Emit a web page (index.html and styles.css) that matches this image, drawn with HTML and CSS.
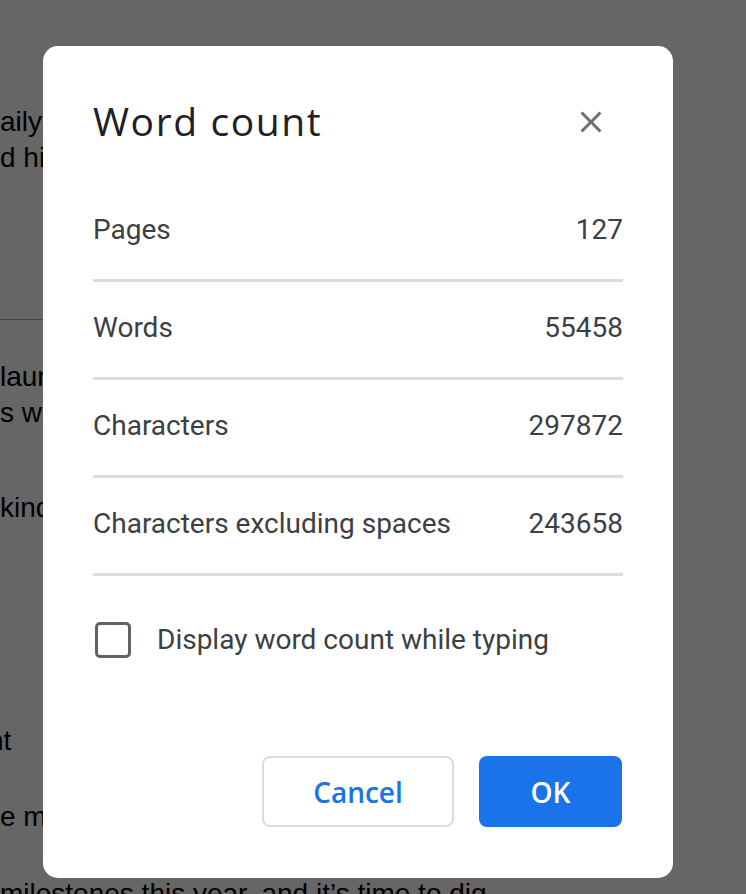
FILE: index.html
```html
<!DOCTYPE html>
<html lang="en">
<head>
    <meta charset="UTF-8">
    <meta name="viewport" content="width=device-width, initial-scale=1.0">
    <title>Word count</title>
    <link rel="stylesheet" href="styles.css">
</head>
<body>
<div class="document">
    <p>aily<br>d hi</p>
    <hr class="doc-rule">
    <p>laun<br>s we</p>
    <p class="gap-small">kind</p>
    <p class="gap-large cut">nt</p>
    <p class="gap-tight">e m</p>
    <p class="gap-last">milestones this year, and it’s time to dig</p>
</div>

<div class="overlay">
    <div class="dialog">
        <div class="dialog-header">
            <h1 class="dialog-title">Word count</h1>
            <button class="close-button" aria-label="Close">
                <svg width="36" height="36" viewBox="0 0 24 24"><path fill="#6f6f6f" d="M19 6.41L17.59 5 12 10.59 6.41 5 5 6.41 10.59 12 5 17.59 6.41 19 12 13.41 17.59 19 19 17.59 13.41 12z"/></svg>
            </button>
        </div>

        <div class="count-row"><span>Pages</span><span>127</span></div>
        <div class="count-row"><span>Words</span><span>55458</span></div>
        <div class="count-row"><span>Characters</span><span>297872</span></div>
        <div class="count-row"><span>Characters excluding spaces</span><span>243658</span></div>

        <label class="check-row">
            <span class="checkbox"></span>
            <span>Display word count while typing</span>
        </label>

        <div class="dialog-actions">
            <button class="dialog-button cancel">Cancel</button>
            <button class="dialog-button ok">OK</button>
        </div>
    </div>
</div>
</body>
</html>
```

FILE: styles.css
```css
* {
    box-sizing: border-box;
}

body {
    margin: 0;
    background-color: white;
    overflow: hidden;
}

.document {
    padding-top: 104px;
    font-family: "Liberation Sans", Arial, sans-serif;
    font-size: 28px;
    line-height: 36px;
    color: #000;
    white-space: nowrap;
}

.document p {
    margin: 0;
}

.doc-rule {
    width: 500px;
    margin: 143px 0 0;
    border: none;
    border-top: 1px solid #aaa;
}

.doc-rule + p {
    margin-top: 39px;
}

.document .gap-small {
    margin-top: 59px;
}

.document .gap-large {
    margin-top: 197px;
}

.document .gap-tight {
    margin-top: 40px;
}

.document .gap-last {
    margin-top: 41px;
}

.document .cut {
    text-indent: -12px;
}

.overlay {
    position: fixed;
    top: 0;
    left: 0;
    right: 0;
    bottom: 0;
    background-color: rgba(0, 0, 0, 0.6);
}

.dialog {
    width: 630px;
    margin: 46px 0 0 43px;
    padding: 48px 50px 51px;
    background-color: white;
    border-radius: 15px;
}

.dialog-header {
    display: flex;
    justify-content: space-between;
    align-items: flex-start;
    height: 48px;
    margin-bottom: 42px;
}

.dialog-title {
    margin: 3px 0 0;
    font-family: "Open Sans", sans-serif;
    font-weight: 400;
    font-size: 39px;
    line-height: 48px;
    letter-spacing: 1.6px;
    color: #202124;
}

.close-button {
    display: flex;
    padding: 0;
    margin: 10px 14px 0 0;
    background: none;
    border: none;
    cursor: pointer;
}

.count-row {
    display: flex;
    justify-content: space-between;
    padding: 31px 0 34px;
    border-bottom: 3px solid #dadce0;
    font-family: Roboto, sans-serif;
    font-size: 28px;
    line-height: 30px;
    color: #3c4043;
}

.check-row {
    display: flex;
    align-items: center;
    gap: 26px;
    margin-top: 46px;
    font-family: Roboto, sans-serif;
    font-size: 28px;
    line-height: 36px;
    color: #3c4043;
}

.checkbox {
    width: 36px;
    height: 36px;
    margin-left: 2px;
    border: 3.5px solid #5f6368;
    border-radius: 5px;
}

.dialog-actions {
    display: flex;
    justify-content: flex-end;
    gap: 25px;
    margin-top: 98px;
}

.dialog-button {
    height: 71px;
    padding: 0 48px;
    border-radius: 8px;
    font-family: "Open Sans", sans-serif;
    font-weight: 600;
    font-size: 28px;
    cursor: pointer;
}

.dialog-button.cancel {
    width: 192px;
    background-color: white;
    border: 2px solid #dadce0;
    color: #1a73e8;
}

.dialog-button.ok {
    width: 143px;
    margin-right: 1px;
    background-color: #1a73e8;
    border: none;
    color: white;
}
```
